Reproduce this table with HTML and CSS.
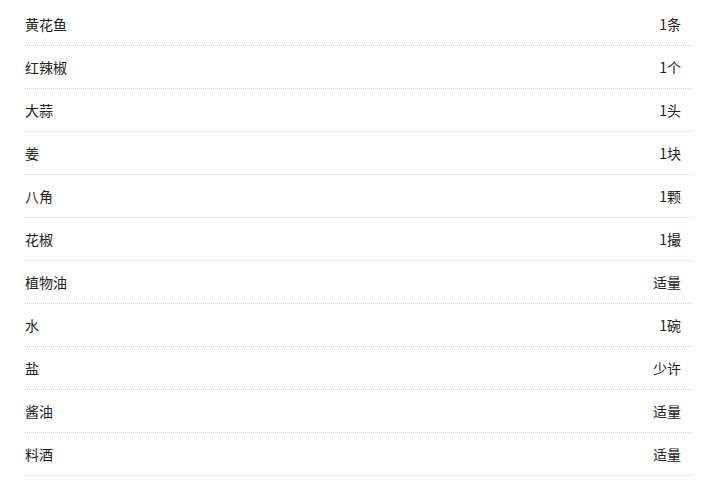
FILE: index.html
```html
<!DOCTYPE html>
<html lang="zh">
<head>
<meta charset="utf-8">
<link rel="stylesheet" href="styles.css">
</head>
<body>
<ul class="list">
  <li class="row"><span>黄花鱼</span><span>1条</span></li>
  <li class="row"><span>红辣椒</span><span>1个</span></li>
  <li class="row"><span>大蒜</span><span>1头</span></li>
  <li class="row"><span>姜</span><span>1块</span></li>
  <li class="row"><span>八角</span><span>1颗</span></li>
  <li class="row"><span>花椒</span><span>1撮</span></li>
  <li class="row"><span>植物油</span><span>适量</span></li>
  <li class="row"><span>水</span><span>1碗</span></li>
  <li class="row"><span>盐</span><span>少许</span></li>
  <li class="row"><span>酱油</span><span>适量</span></li>
  <li class="row"><span>料酒</span><span>适量</span></li>
</ul>
</body>
</html>
```
FILE: styles.css
```css
html, body {
  margin: 0;
  padding: 0;
  background: #fff;
}
body {
  font-family: "Noto Sans CJK SC", "Liberation Sans", sans-serif;
  font-size: 14px;
  color: #222;
}
.list {
  list-style: none;
  margin: 3px 15px 0 25px;
  padding: 0;
}
.row {
  display: flex;
  justify-content: space-between;
  align-items: center;
  height: 42px;
  padding-right: 11px;
  border-bottom: 1px dotted #d4d4d4;
}
```
